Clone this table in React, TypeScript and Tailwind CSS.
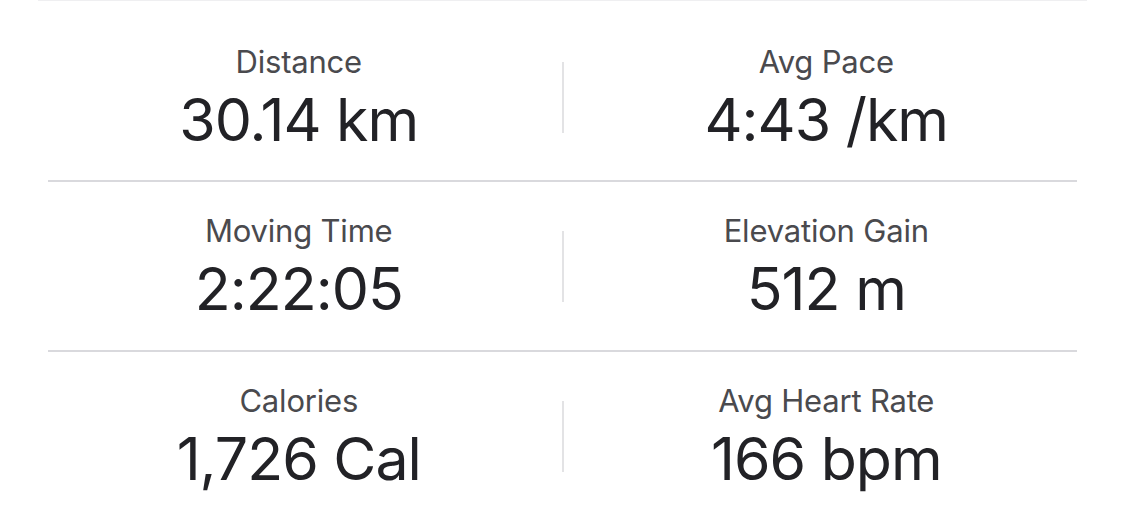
const stats = [
  [
    { label: 'Distance', value: '30.14 km' },
    { label: 'Avg Pace', value: '4:43 /km' },
  ],
  [
    { label: 'Moving Time', value: '2:22:05' },
    { label: 'Elevation Gain', value: '512 m' },
  ],
  [
    { label: 'Calories', value: '1,726 Cal' },
    { label: 'Avg Heart Rate', value: '166 bpm' },
  ],
]

function Stat({ label, value }: { label: string; value: string }) {
  return (
    <div className="flex-1 flex flex-col items-center">
      <div className="text-[31px] leading-[38px] text-[#4a4a4e] tracking-[-0.2px]">{label}</div>
      <div className="text-[59px] leading-[64px] text-[#222226] tracking-[-1px] mt-[7px]">{value}</div>
    </div>
  )
}

export default function App() {
  return (
    <div className="w-[1125px] h-[529px] bg-white font-['Inter',sans-serif] overflow-hidden">
      <div className="mx-[38px] h-px bg-[#efeff1]" />
      <div className="px-[36px]">
        {stats.map((row, i) => (
          <div key={i}>
            {i > 0 && <div className="mx-[12px] h-[2px] bg-[#d9d9dd]" />}
            <div className={`flex items-center ${i === 0 ? 'h-[179px] pt-[14px]' : 'h-[168px]'}`}>
              <Stat {...row[0]} />
              <div className="w-[2px] h-[71px] bg-[#e3e3e5]" />
              <Stat {...row[1]} />
            </div>
          </div>
        ))}
      </div>
    </div>
  )
}
